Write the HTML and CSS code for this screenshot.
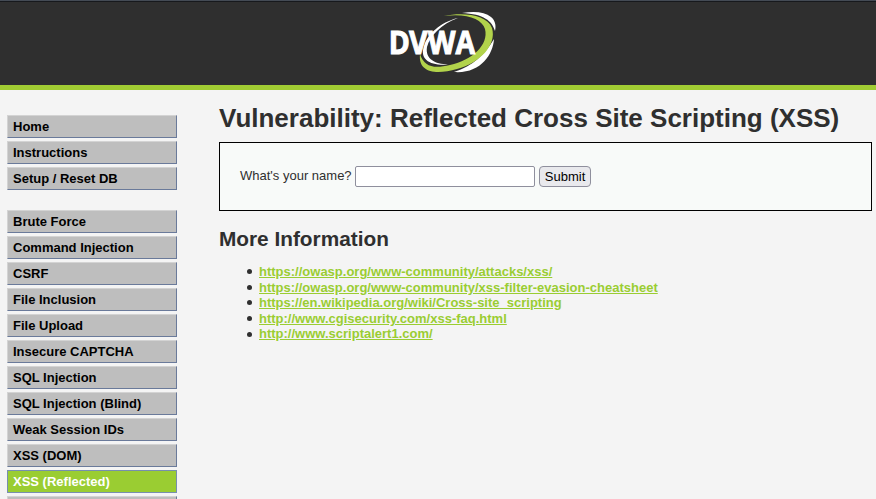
FILE: index.html
```html
<!DOCTYPE html>
<html lang="en">
<head>
<meta charset="utf-8">
<title>Vulnerability: Reflected Cross Site Scripting (XSS)</title>
<link rel="stylesheet" href="styles.css">
</head>
<body>
<header class="header">
  <svg class="logo" width="110" height="66" viewBox="0 0 110 66" role="img" aria-label="DVWA">
    <path fill="#fff" d="M75 3C88 1 98 2 104 7C109 11 109 17 108 21C105 11 97 4 75 3Z"/>
    <path fill="#fff" d="M107 29C106 45 93 64 67 62C86 56 98 44 107 29Z"/>
    <path fill="#fff" d="M71 8C53 12 40 25 37 36C32 50 44 56 61 54.500C48 54 38 49 40 37C43 26 54 14 71 8Z"/>
    <path fill="#b2d34b" d="M57 6C77 2 100 5 105 18C110 35 93 53 70 59C49 65 31 63 33 44C37 57 47 59 63 55C85 50 102 35 98 19C95 9 80 3 57 6Z"/>
    <text class="logo-text" transform="translate(1.800 43.500) scale(.89 1)"><tspan x="0">D</tspan><tspan x="22.600">V</tspan><tspan x="44">W</tspan><tspan x="75">A</tspan></text>
  </svg>
</header>
<div class="layout">
  <nav class="menu">
    <ul class="menu-block">
      <li>Home</li><li>Instructions</li><li>Setup / Reset DB</li>
    </ul>
    <ul class="menu-block">
      <li>Brute Force</li><li>Command Injection</li><li>CSRF</li><li>File Inclusion</li><li>File Upload</li><li>Insecure CAPTCHA</li><li>SQL Injection</li><li>SQL Injection (Blind)</li><li>Weak Session IDs</li><li>XSS (DOM)</li><li class="selected">XSS (Reflected)</li><li></li>
    </ul>
  </nav>
  <main class="content">
    <h1>Vulnerability: Reflected Cross Site Scripting (XSS)</h1>
    <form class="panel">
      <label for="name">What's your name?</label>
      <input id="name" class="field" type="text">
      <button class="submit" type="button">Submit</button>
    </form>
    <h2>More Information</h2>
    <ul class="links">
      <li><a href="#">https://owasp.org/www-community/attacks/xss/</a></li>
      <li><a href="#">https://owasp.org/www-community/xss-filter-evasion-cheatsheet</a></li>
      <li><a href="#">https://en.wikipedia.org/wiki/Cross-site_scripting</a></li>
      <li><a href="#">http://www.cgisecurity.com/xss-faq.html</a></li>
      <li><a href="#">http://www.scriptalert1.com/</a></li>
    </ul>
  </main>
</div>
</body>
</html>
```
FILE: styles.css
```css
* { box-sizing: border-box; }
html { overflow: hidden; }
body {
  margin: 0;
  height: 499px;
  overflow: hidden;
  background: #f4f4f4;
  color: #2f2f2f;
  font: 13px/15.6px "Liberation Sans", Arial, sans-serif;
}
.header {
  height: 90px;
  padding: 9px 0 0 387px;
  background: #2f2f2f;
  border-top: 1px solid #444b55;
  border-bottom: 5px solid #a1cc33;
  box-shadow: inset 0 1px #17191d;
}
.logo { display: block; }
.logo-text {
  font: bold 32px "Open Sans", sans-serif;
  fill: #fff;
  stroke: #fff;
  stroke-width: 1px;
}
.layout { display: flex; height: 409px; overflow: hidden; }
.menu { width: 177px; padding: 25px 0 0 7px; flex: none; }
.menu-block {
  display: flex;
  flex-direction: column;
  gap: 3px;
  margin: 0 0 20px;
  padding: 0;
  list-style: none;
}
.menu-block li {
  height: 23px;
  padding: 3px 5px;
  border: 1px solid;
  border-color: #d3d3d3 #6a7a9a #6a7a9a #d3d3d3;
  background: #bebebe;
  color: #000;
  font-weight: bold;
}
.menu-block .selected {
  border-color: #778fae;
  background: #9acd32;
  color: #fff;
}
.content { width: 653px; margin-left: 42px; }
h1 { margin: 12px 0 8px; font-size: 26px; line-height: 32px; white-space: nowrap; }
.panel {
  display: flex;
  align-items: flex-start;
  height: 69px;
  padding: 23px 20px;
  border: 1px solid #000;
  background: #f8faf9;
}
.panel label { padding-top: 2px; }
.field {
  width: 180px;
  height: 21px;
  margin: 0 4px 0 3px;
  border: 1px solid #8f8f9d;
  border-radius: 2px;
  background: #fff;
}
.submit {
  width: 52px;
  height: 21px;
  padding: 0 0 0 1px;
  border: 1px solid #8f8f9d;
  border-radius: 4px;
  background: #e9e9ed;
  color: #000;
  font: 13px "Liberation Sans", Arial, sans-serif;
}
h2 { margin: 15px 0 13px; font-size: 20.8px; line-height: 25px; }
.links { margin: 0; padding-left: 28px; list-style: none; }
.links li { display: flex; align-items: center; gap: 7px; }
.links li::before {
  content: "";
  width: 5px;
  height: 5px;
  border-radius: 50%;
  background: #2f2f2f;
}
.links a { color: #9acd32; font-weight: bold; text-decoration: underline; }
```
